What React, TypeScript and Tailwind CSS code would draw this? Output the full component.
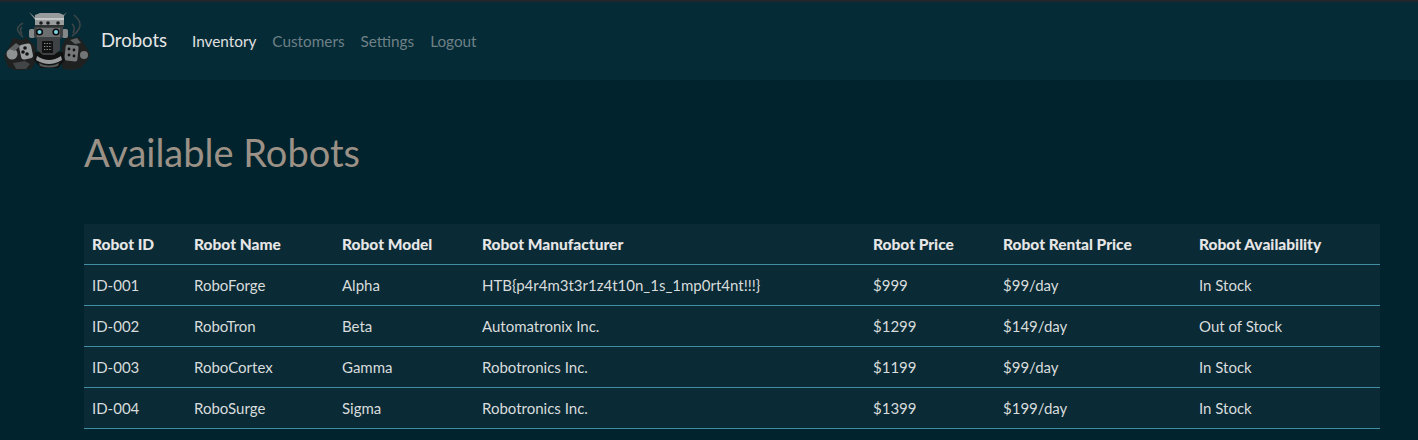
const rows = [
  ["ID-001", "RoboForge", "Alpha", "HTB{p4r4m3t3r1z4t10n_1s_1mp0rt4nt!!!}", "$999", "$99/day", "In Stock"],
  ["ID-002", "RoboTron", "Beta", "Automatronix Inc.", "$1299", "$149/day", "Out of Stock"],
  ["ID-003", "RoboCortex", "Gamma", "Robotronics Inc.", "$1199", "$99/day", "In Stock"],
  ["ID-004", "RoboSurge", "Sigma", "Robotronics Inc.", "$1399", "$199/day", "In Stock"],
];
const heads = ["Robot ID", "Robot Name", "Robot Model", "Robot Manufacturer", "Robot Price", "Robot Rental Price", "Robot Availability"];

function Logo() {
  return (
    <svg width="90" height="78" viewBox="0 2 90 78" className="shrink-0">
      <path d="M23 23q-7 4-5 8t5 6M22 27q-3 3 0 7" fill="none" stroke="#3d4547" strokeWidth="1.600" />
      <path d="M74 15q7 6 6 11t-8 10M72 24q4 3 1 9" fill="none" stroke="#3d4547" strokeWidth="1.600" />
      <path d="M29 12l9 8-2 1zM67 12l-9 8 2 1z" fill="#8a8d8d" />
      <path d="M4 56l5-9 4-9 10 2 3-3 9 9 2 12-5 11-8 1-9 0-7-3z" fill="#1f2121" />
      <path d="M90 54l-5-9-6-8-7 1-5-2-5 10-2 14 3 9 9 1 9-2 6-7z" fill="#1f2121" />
      <circle cx="12" cy="54" r="5.500" fill="#8f9292" />
      <path d="M9 49l7-6 4 3-5 5z" fill="#5f6262" />
      <rect x="20" y="44" width="12" height="15" rx="3" fill="#9b9e9e" transform="rotate(-12 26 51)" />
      <circle cx="25" cy="48" r="1.800" fill="#111" />
      <circle cx="23" cy="52" r="1.800" fill="#111" />
      <circle cx="27" cy="54" r="1.800" fill="#111" />
      <path d="M13 63l12-2 5 3-4 5-10 0z" fill="#424546" />
      <rect x="65" y="45" width="13" height="16" rx="2" fill="#747777" transform="rotate(6 71 53)" />
      <circle cx="69" cy="49" r="1.400" fill="#111" />
      <circle cx="74" cy="50" r="1.400" fill="#111" />
      <circle cx="69" cy="55" r="1.400" fill="#111" />
      <circle cx="74" cy="56" r="1.400" fill="#111" />
      <circle cx="84" cy="55" r="4" fill="#737676" />
      <path d="M70 40l7-2 4 5-6 1z" fill="#5f6262" />
      <path d="M35 52h28l2 8-7 8H41l-7-8z" fill="#101212" />
      <path d="M37 56q12 8 24 0l1 4q-13 8-26 0z" fill="#9a9d9d" />
      <path d="M39 63q10 5 20 0l-1 3q-9 3-18 0z" fill="#545757" />
      <path d="M35 15l5-2h19l5 2v11H35z" fill="#989b9b" />
      <rect x="35" y="18" width="29" height="2" fill="#c4c6c6" />
      <rect x="35" y="25" width="29" height="2" fill="#303333" />
      <circle cx="41" cy="23" r="1.800" fill="#1a1c1c" />
      <circle cx="48" cy="23" r="1.800" fill="#1a1c1c" />
      <circle cx="58" cy="23" r="1.800" fill="#1a1c1c" />
      <rect x="29" y="29" width="6" height="9" rx="2" fill="#858888" />
      <rect x="62" y="29" width="6" height="9" rx="2" fill="#858888" />
      <path d="M34 27h29v9l-3 3v11l-6 5H43l-6-5V39l-3-3z" fill="#3f4244" />
      <path d="M37 28h23v9H37z" fill="#6b6f70" />
      <circle cx="39.500" cy="32" r="3.600" fill="#0c0d0d" />
      <circle cx="39.500" cy="32" r="2" fill="#7fd6e8" />
      <circle cx="56" cy="32" r="3.600" fill="#0c0d0d" />
      <circle cx="56" cy="32" r="2" fill="#7fd6e8" />
      <rect x="42" y="41" width="11" height="12" rx="1" fill="#111313" />
      <path d="M44 43.500h8M44 46.500h8M44 49.500h8" stroke="#8f9292" strokeWidth="1.200" strokeDasharray="1.300 1.300" />
    </svg>
  );
}

export default function App() {
  return (
    <div className="h-[440px] overflow-hidden bg-[#00232d] font-['Lato',sans-serif]">
      <div className="h-[2px] bg-[#22262d]" />
      <nav className="flex h-[78px] items-center bg-[#042b36]">
        <Logo />
        <span className="ml-[11px] text-[18.500px] text-[#e6e6e6]">Drobots</span>
        <div className="ml-[25px] flex gap-4 text-[15.300px]">
          <span className="text-[#e0e0e0]">Inventory</span>
          <span className="text-[#6f8086]">Customers</span>
          <span className="text-[#6f8086]">Settings</span>
          <span className="text-[#6f8086]">Logout</span>
        </div>
      </nav>
      <main className="pl-[84px]">
        <h1 className="mt-[48px] text-[38px] leading-[48px] text-[#9c9186]">Available Robots</h1>
        <table className="mt-[48px] w-[1296px] table-fixed border-separate border-spacing-0 bg-[#0a2a35] text-[15px] text-[#d8dcdc]">
          <colgroup>
            <col className="w-[102px]" />
            <col className="w-[148px]" />
            <col className="w-[140px]" />
            <col className="w-[391px]" />
            <col className="w-[130px]" />
            <col className="w-[196px]" />
            <col className="w-[189px]" />
          </colgroup>
          <thead>
            <tr>
              {heads.map((h) => (
                <th key={h} className="h-[41px] border-b border-[#3f8ea3] px-2 pt-px text-left text-[15.500px] font-black text-[#e6e6e6]">{h}</th>
              ))}
            </tr>
          </thead>
          <tbody>
            {rows.map((r) => (
              <tr key={r[0]}>
                {r.map((c) => (
                  <td key={c} className="h-[41px] border-b border-[#3f8ea3] px-2 pt-px">{c}</td>
                ))}
              </tr>
            ))}
          </tbody>
        </table>
      </main>
    </div>
  );
}
